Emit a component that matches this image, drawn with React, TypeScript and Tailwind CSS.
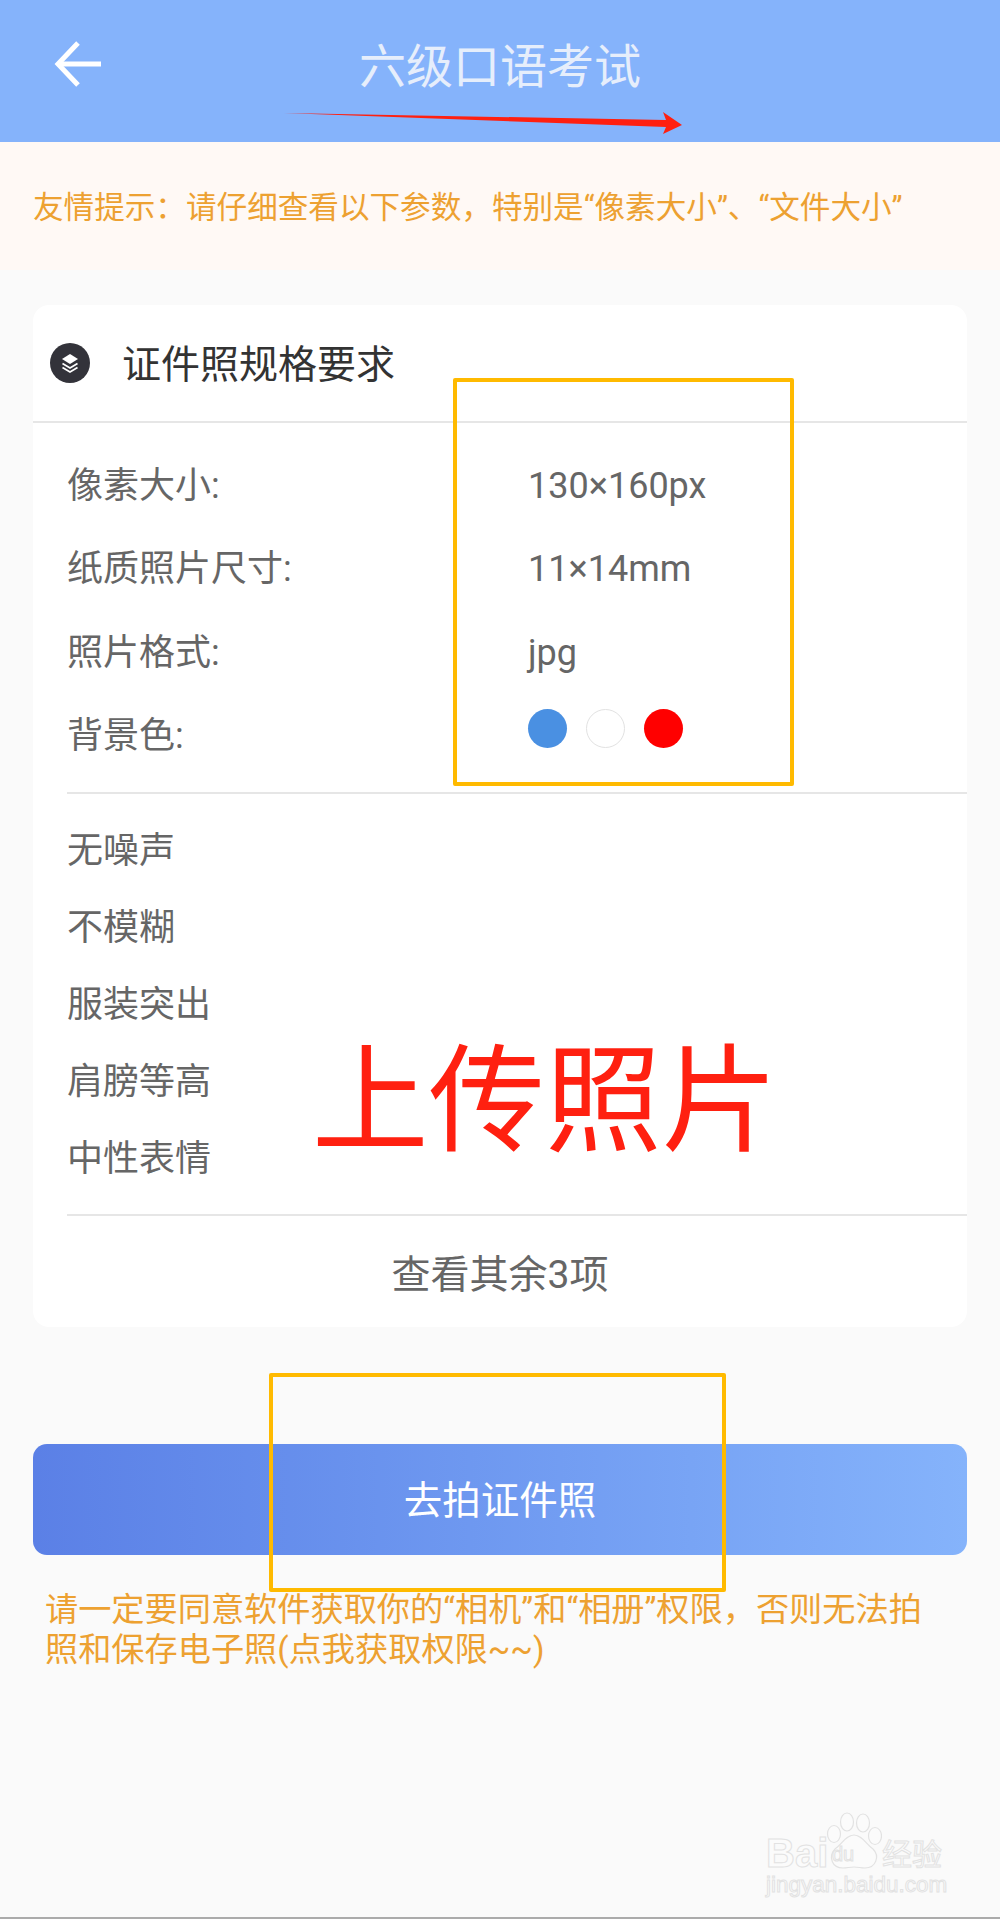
const fontStack = "font-['Roboto','Noto_Sans_CJK_SC',sans-serif]";

const specRows = [
  { label: "像素大小:", value: "130×160px" },
  { label: "纸质照片尺寸:", value: "11×14mm" },
  { label: "照片格式:", value: "jpg" },
];

const requirements = ["无噪声", "不模糊", "服装突出", "肩膀等高", "中性表情"];

function LayersBadge() {
  return (
    <div className="flex h-10 w-10 items-center justify-center rounded-full bg-[#33333a]">
      <svg width="24" height="24" viewBox="0 0 24 24" fill="none">
        <path d="M12 3l8 5-8 5-8-5z" fill="#fff" />
        <path d="M4.5 12.5L12 17l7.5-4.5" stroke="#fff" strokeWidth="1.7" />
        <path d="M4.5 16.5L12 21l7.5-4.5" stroke="#fff" strokeWidth="1.7" />
      </svg>
    </div>
  );
}

function Watermark() {
  const outline = "text-[#fbfbfb] [-webkit-text-stroke:1px_#e2e2e2]";
  return (
    <div className="absolute left-[766px] top-[1812px] h-[86px] w-[182px] font-['Liberation_Sans','Noto_Sans_CJK_SC',sans-serif]">
      <svg className="absolute left-[60px] top-0" width="56" height="60" viewBox="0 0 56 60" fill="#fbfbfb" stroke="#e2e2e2" strokeWidth="1.2">
        <ellipse cx="8" cy="22" rx="6.5" ry="8.5" />
        <ellipse cx="21" cy="10" rx="6.5" ry="9" />
        <ellipse cx="37" cy="11" rx="6.5" ry="9" />
        <ellipse cx="49" cy="24" rx="6.5" ry="8.5" />
        <path d="M28 23c8 0 12 9 19 14 7 7 3 19-8 19-4 0-7-1-11-1s-7 1-11 1C6 56 2 45 9 37c7-5 11-14 19-14z" />
      </svg>
      <span className={`absolute left-[66px] top-[30px] text-[20px] leading-[24px] ${outline}`}>du</span>
      <span className={`absolute left-0 top-[18px] text-[40px] leading-[46px] font-bold ${outline}`}>Bai</span>
      <span className={`absolute left-[116px] top-[26px] text-[30px] leading-[34px] ${outline}`}>经验</span>
      <span className={`absolute bottom-0 left-0 text-[22.5px] leading-[26px] ${outline}`}>jingyan.baidu.com</span>
    </div>
  );
}

export default function App() {
  return (
    <div className={`relative flex h-[1919px] w-full flex-col overflow-hidden border-b-2 border-[#ababab] bg-[#fafafa] ${fontStack}`}>
      <header className="relative flex h-[142px] shrink-0 items-center justify-center bg-[#85b3fb] pb-[10px]">
        <svg className="absolute left-[53px] top-[40px]" width="52" height="48" viewBox="0 0 52 48" fill="none" stroke="#fff" strokeWidth="5">
          <path d="M48 24H6" />
          <path d="M25 3L5 24l20 21" />
        </svg>
        <h1 className="text-[47px] leading-none font-normal text-[#e6eefb]">六级口语考试</h1>
      </header>

      <div className="flex h-[128px] shrink-0 items-center bg-[#fff9f5] pl-[33px] pt-[3px] text-[30.6px] text-[#eda131]">
        友情提示：请仔细查看以下参数，特别是“像素大小”、“文件大小”
      </div>

      <section className="mx-[33px] mt-[35px] flex h-[1022px] flex-col rounded-2xl bg-white">
        <div className="flex h-[118px] shrink-0 items-center gap-[32px] border-b-2 border-[#e6e6e6] pl-[17px]">
          <LayersBadge />
          <h2 className="pt-[4px] text-[39px] leading-none font-normal text-[#333]">证件照规格要求</h2>
        </div>

        <div className="ml-[34px] flex flex-col border-b-2 border-[#e6e6e6] pt-[21px] pb-[14px] text-[36px] text-[#666]">
          {specRows.map((row) => (
            <div key={row.label} className="flex h-[83.5px] items-center">
              <span className="w-[461px]">{row.label}</span>
              <span>{row.value}</span>
            </div>
          ))}
          <div className="flex h-[83.5px] items-center">
            <span className="w-[461px]">背景色:</span>
            <div className="mb-[16px] flex items-center gap-[19px]">
              <span className="h-[39px] w-[39px] rounded-full bg-[#4a90e2]" />
              <span className="h-[39px] w-[39px] rounded-full border border-[#e2e2e2] bg-white" />
              <span className="h-[39px] w-[39px] rounded-full bg-[#ff0000]" />
            </div>
          </div>
        </div>

        <div className="ml-[34px] flex flex-col border-b-2 border-[#e6e6e6] pt-[18px] pb-[17px] text-[36px] text-[#666]">
          {requirements.map((item) => (
            <div key={item} className="flex h-[77px] items-center">
              {item}
            </div>
          ))}
        </div>

        <div className="flex flex-1 items-center justify-center pt-[7px] text-[39px] text-[#666]">查看其余3项</div>
      </section>

      <button className="mx-[33px] mt-[117px] flex h-[111px] shrink-0 items-center justify-center rounded-[14px] bg-gradient-to-r from-[#5b80e6] to-[#85b3fb] pt-[3px] text-[38.5px] text-white">
        去拍证件照
      </button>

      <p className="mt-[35px] mr-[68px] ml-[45px] text-[33.2px] leading-[40px] text-[#eda131]">
        请一定要同意软件获取你的“相机”和“相册”权限，否则无法拍照和保存电子照(点我获取权限~~)
      </p>

      {/* 标注层 */}
      <svg className="absolute left-[280px] top-[105px]" width="405" height="30" viewBox="0 0 405 30">
        <path d="M4 8l382 7-3-8 19 13-19 9 3-7z" fill="#ff2010" />
      </svg>
      <div className="absolute left-[453px] top-[378px] h-[408px] w-[341px] rounded-[2px] border-4 border-[#ffba00]" />
      <div className="absolute left-[269px] top-[1373px] h-[219px] w-[457px] rounded-[2px] border-4 border-[#ffba00]" />
      <div className="absolute left-[312px] top-[1032px] text-[116.5px] leading-[140px] whitespace-nowrap text-[#ff2010]">上传照片</div>
      <Watermark />
    </div>
  );
}
